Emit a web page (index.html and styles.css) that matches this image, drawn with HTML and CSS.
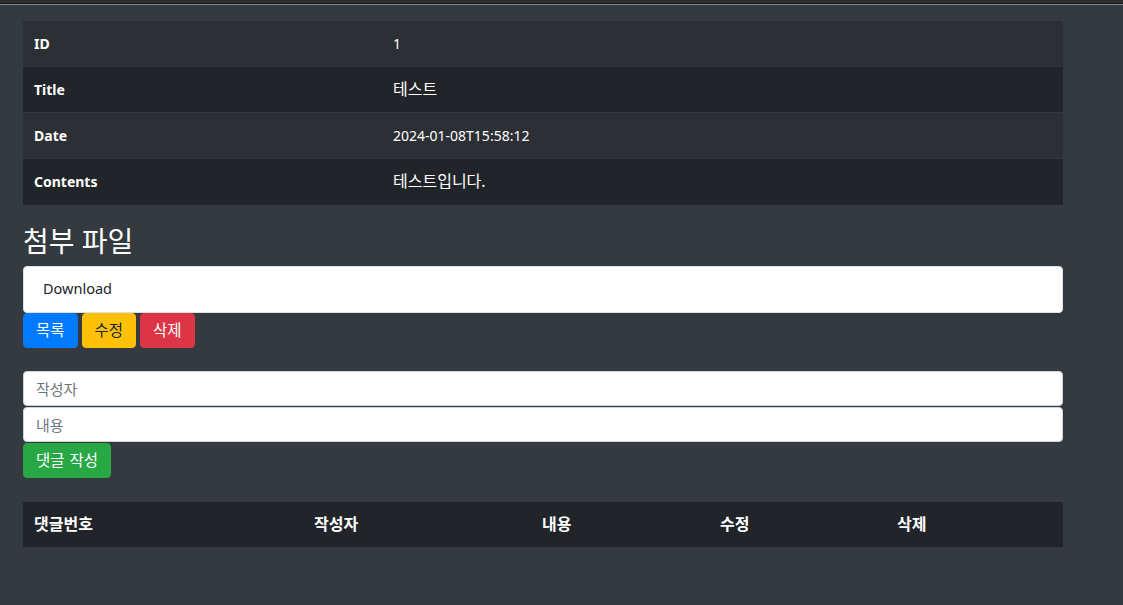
FILE: index.html
```html
<!DOCTYPE html>
<html lang="ko">
<head>
<meta charset="utf-8">
<title>게시글 상세</title>
<link rel="stylesheet" href="styles.css">
</head>
<body>
<div class="topbar"></div>
<main class="container">
  <table class="detail">
    <tbody>
      <tr class="odd"><th>ID</th><td>1</td></tr>
      <tr><th>Title</th><td class="ko">테스트</td></tr>
      <tr class="odd"><th>Date</th><td>2024-01-08T15:58:12</td></tr>
      <tr><th>Contents</th><td class="ko">테스트입니다.</td></tr>
    </tbody>
  </table>

  <h3 class="heading">첨부 파일</h3>
  <ul class="files">
    <li class="file-item">Download</li>
  </ul>

  <div class="actions">
    <button class="btn btn-primary">목록</button>
    <button class="btn btn-warning">수정</button>
    <button class="btn btn-danger">삭제</button>
  </div>

  <form class="comment-form">
    <input class="field" type="text" placeholder="작성자">
    <input class="field" type="text" placeholder="내용">
    <div class="submit-row"><button type="button" class="btn btn-success">댓글 작성</button></div>
  </form>

  <table class="comments">
    <thead>
      <tr>
        <th class="c1">댓글번호</th>
        <th class="c2">작성자</th>
        <th class="c3">내용</th>
        <th class="c4">수정</th>
        <th class="c5">삭제</th>
      </tr>
    </thead>
  </table>
</main>
</body>
</html>
```
FILE: styles.css
```css
* { box-sizing: border-box; }

html, body {
  margin: 0;
  padding: 0;
}

body {
  background: #343a40;
  color: #fff;
  font-family: "Noto Sans", "Noto Sans CJK KR", sans-serif;
  font-size: 14px;
  line-height: 1.5;
  min-height: 605px;
}

.topbar {
  height: 5px;
  background: #2f2f2f;
  border-bottom: 1px solid #8a8a8a;
  box-shadow: inset 0 -1px 0 #151515;
}

.container {
  width: 1040px;
  margin-left: 23px;
  padding-top: 16px;
}

table {
  width: 100%;
  border-collapse: collapse;
  color: #fff;
}

.detail {
  background: #212529;
  margin-bottom: 20px;
}

.detail tr.odd { background: #2c3034; }

.detail th,
.detail td {
  padding: 12px 11px 12px 11px;
  text-align: left;
  vertical-align: top;
  border-top: 1px solid #32383e;
  height: 46px;
  line-height: 21px;
}

.detail tr:first-child th,
.detail tr:first-child td { border-top: none; height: 45px; }

.detail th {
  width: 359px;
  font-weight: 700;
}

.detail td { font-weight: 400; }

.detail td.ko { font-size: 16px; }

.heading {
  margin: 0 0 8px;
  font-size: 28px;
  font-weight: 400;
  line-height: 1.2;
}

.files {
  list-style: none;
  margin: 0;
  padding: 0;
}

.file-item {
  background: #fff;
  color: #212529;
  border: 1px solid #dee2e6;
  border-radius: 4px;
  padding: 11px 19px 12px;
  height: 47px;
  font-size: 14.5px;
}

.actions {
  display: flex;
  gap: 4px;
}

.btn {
  font-family: inherit;
  font-size: 15.5px;
  line-height: 21px;
  padding: 6px 12px;
  border: 1px solid transparent;
  border-radius: 4px;
  height: 35px;
  cursor: pointer;
}

.btn-primary { background: #007bff; border-color: #007bff; color: #fff; }
.btn-warning { background: #ffc107; border-color: #ffc107; color: #212529; }
.btn-danger  { background: #dc3545; border-color: #dc3545; color: #fff; }
.btn-success { background: #28a745; border-color: #28a745; color: #fff; word-spacing: 1px; }

.comment-form {
  margin: 23px 0 0;
  display: flex;
  flex-direction: column;
}

.field {
  display: block;
  width: 100%;
  height: 35px;
  padding: 6px 12px;
  font-family: inherit;
  font-size: 15px;
  line-height: 21px;
  color: #495057;
  background: #fff;
  border: 1px solid #ced4da;
  border-radius: 4px;
}

.field + .field { margin-top: 1px; }

.field::placeholder { color: #6c757d; }

.submit-row {
  display: flex;
  margin-top: 1px;
}

.comments {
  margin-top: 24px;
  background: #212529;
}

.comments th {
  padding: 12px 11px;
  height: 45px;
  text-align: left;
  font-weight: 700;
  font-size: 16px;
  line-height: 21px;
}

.comments .c1 { width: 280px; }
.comments .c2 { width: 228px; }
.comments .c3 { width: 178px; }
.comments .c4 { width: 177px; }
.comments .c5 { width: 177px; }
```
